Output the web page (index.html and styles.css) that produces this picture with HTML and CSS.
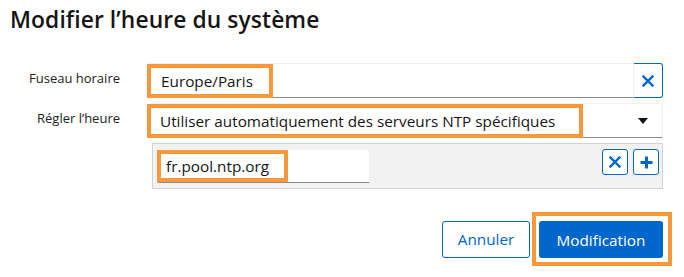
FILE: index.html
```html
<!DOCTYPE html>
<html lang="fr">
<head>
  <meta charset="UTF-8">
  <meta name="viewport" content="width=device-width, initial-scale=1.0">
  <title>Modifier l'heure du système</title>
  <link rel="stylesheet" href="styles.css">
</head>
<body>
  <div class="dialog">
    <h1>Modifier l’heure du système</h1>
    <div class="form">
      <label class="label">Fuseau horaire</label>
      <div class="field tz">
        <div class="input"><span class="mark mark-tz">Europe/Paris</span></div>
        <button class="clear-btn">
          <svg width="12" height="12" viewBox="0 0 12 12"><path d="M1.5 1.5 L10.5 10.5 M10.5 1.5 L1.5 10.5" stroke="#0066cc" stroke-width="2.4" stroke-linecap="square"/></svg>
        </button>
      </div>

      <label class="label">Régler l’heure</label>
      <div class="field select">
        <span class="mark mark-sel">Utiliser automatiquement des serveurs NTP spécifiques</span>
        <svg class="caret" width="10" height="6" viewBox="0 0 10 6"><path d="M0 0 H10 L5 6 Z" fill="#151515"/></svg>
      </div>

      <div></div>
      <div class="ntp">
        <div class="input ntp-input"><span class="mark mark-ntp">fr.pool.ntp.org</span></div>
        <div class="ntp-actions">
          <button class="icon-btn">
            <svg width="12" height="12" viewBox="0 0 12 12"><path d="M1.5 1.5 L10.5 10.5 M10.5 1.5 L1.5 10.5" stroke="#0066cc" stroke-width="2.4" stroke-linecap="square"/></svg>
          </button>
          <button class="icon-btn">
            <svg width="13" height="13" viewBox="0 0 13 13"><path d="M6.5 0.5 V12.5 M0.5 6.5 H12.5" stroke="#0066cc" stroke-width="3"/></svg>
          </button>
        </div>
      </div>
    </div>

    <div class="footer">
      <button class="btn btn-link">Annuler</button>
      <span class="mark-btn"><button class="btn btn-primary">Modification</button></span>
    </div>
  </div>
</body>
</html>
```

FILE: styles.css
```css
* {
  margin: 0;
  padding: 0;
  box-sizing: border-box;
  font-family: "Open Sans", "Noto Sans", sans-serif;
}

body {
  background-color: #fff;
  color: #151515;
  width: 684px;
  height: 277px;
  overflow: hidden;
}

.dialog {
  padding: 5px 21px 0 10px;
}

h1 {
  font-size: 22.8px;
  font-weight: 600;
  line-height: 30px;
  margin-bottom: 28px;
  letter-spacing: 0.1px;
}

.form {
  display: grid;
  grid-template-columns: 110px 1fr;
  column-gap: 29px;
  row-gap: 5px;
}

.label {
  font-size: 13px;
  text-align: right;
  padding-top: 6px;
  color: #222;
}

.field {
  display: flex;
  height: 35px;
}

.input {
  flex: 1;
  display: flex;
  align-items: center;
  background-color: #fff;
  border: 1px solid #f0f0f0;
  border-bottom-color: #8a8d90;
  font-size: 15.3px;
}

.clear-btn {
  width: 29px;
  background-color: #fff;
  border: 1px solid #0066cc;
  border-left: none;
  border-radius: 0 3px 3px 0;
  display: flex;
  align-items: center;
  justify-content: center;
}

.select {
  align-items: center;
  justify-content: space-between;
  border: 1px solid #f0f0f0;
  border-bottom-color: #8a8d90;
  border-radius: 3px 3px 0 0;
  font-size: 15.3px;
  padding-right: 14px;
}

.mark {
  display: inline-block;
  border: 4px solid #f7993a;
}

.mark-tz {
  margin-left: -3px;
  padding: 3px 16px 3px 10px;
}

.mark-sel {
  margin-left: -3px;
  padding: 3px 24px 3px 9px;
}

.ntp {
  display: flex;
  justify-content: space-between;
  align-items: flex-start;
  margin-left: 3px;
  height: 46px;
  background-color: #f2f2f2;
  border: 1px solid #d2d2d2;
  padding: 5px 3px 0 4px;
}

.ntp-input {
  flex: none;
  width: 213px;
  height: 34px;
  border-color: #f0f0f0 #f0f0f0 #8a8d90;
  border-radius: 3px 3px 0 0;
}

.mark-ntp {
  margin-left: -1px;
  padding: 2px 15px 2px 5px;
}

.ntp-actions {
  display: flex;
  gap: 5px;
}

.icon-btn {
  width: 26px;
  height: 26px;
  background-color: #fff;
  border: 1px solid #0066cc;
  border-radius: 3px;
  display: flex;
  align-items: center;
  justify-content: center;
}

.footer {
  display: flex;
  justify-content: flex-end;
  align-items: center;
  gap: 2px;
  margin-top: 23px;
}

.btn {
  font-size: 15.3px;
  height: 37px;
  border-radius: 3px;
}

.btn-link {
  background-color: #fff;
  color: #0066cc;
  border: 1px solid #0066cc;
  width: 88px;
}

.btn-primary {
  background-color: #0066cc;
  color: #fff;
  border: none;
  width: 124px;
}

.mark-btn {
  display: inline-block;
  border: 4px solid #f7993a;
  padding: 5px 5px 4px 3px;
  margin-right: -9px;
}
```
